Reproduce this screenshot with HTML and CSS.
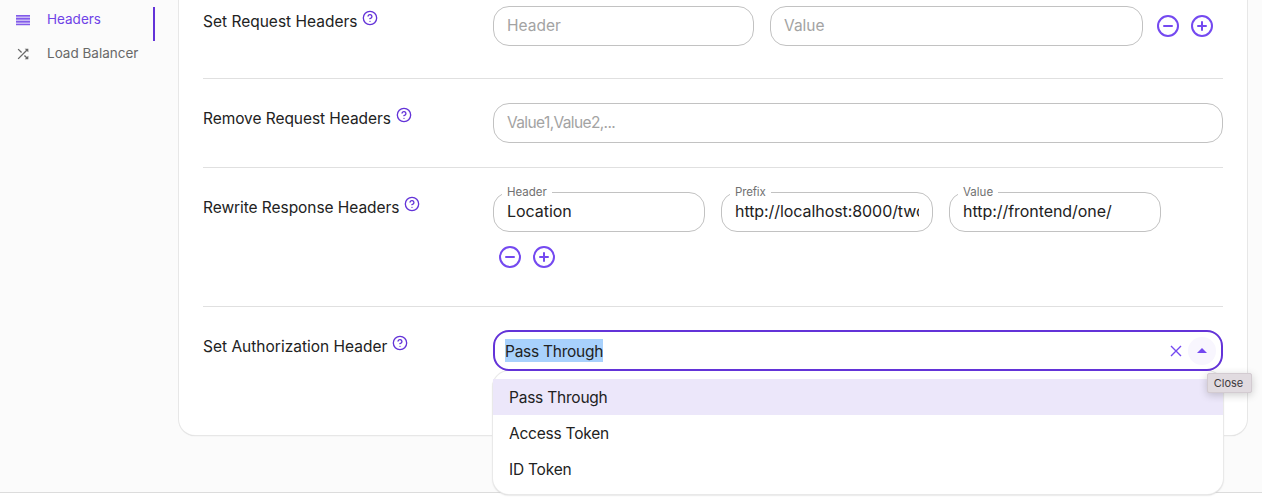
FILE: index.html
```html
<!DOCTYPE html>
<html lang="en">
<head>
<meta charset="utf-8">
<title>Headers</title>
<link rel="stylesheet" href="styles.css">
</head>
<body>
<svg class="defs" aria-hidden="true">
  <symbol id="help" viewBox="0 0 24 24"><circle cx="12" cy="12" r="10"/><path d="M9.09 9a3 3 0 0 1 5.83 1c0 2-3 3-3 3M12 17h.01"/></symbol>
  <symbol id="minus" viewBox="0 0 24 24"><circle cx="12" cy="12" r="10"/><path d="M8 12h8"/></symbol>
  <symbol id="plus" viewBox="0 0 24 24"><circle cx="12" cy="12" r="10"/><path d="M12 8v8M8 12h8"/></symbol>
</svg>
<div class="page">
  <nav class="sidebar">
    <div class="nav-list">
      <a class="nav-item active"><svg class="nav-icon" viewBox="0 0 16 16"><path fill="currentColor" fill-opacity=".35" d="M1 3h14v10H1z"/><path fill="currentColor" fill-opacity=".8" d="M1 3h14v1.6H1zM1 6h14v1.4H1zM1 9h14v1.4H1zM1 12h14v1.2H1z"/></svg><span class="nav-text">Headers</span></a>
      <a class="nav-item"><svg class="nav-icon" viewBox="0 0 24 24"><path fill="currentColor" d="M10.59 9.17 5.41 4 4 5.41l5.17 5.17 1.42-1.41zM14.5 4l2.04 2.04L4 18.59 5.41 20 17.96 7.46 20 9.5V4h-5.5zm.33 9.41-1.41 1.41 3.13 3.13L14.5 20H20v-5.5l-2.04 2.04-3.13-3.13z"/></svg><span class="nav-text">Load Balancer</span></a>
    </div>
    <div class="indicator"></div>
  </nav>
  <main class="card">
    <section class="row first">
      <div class="label"><span>Set Request Headers</span><svg class="help"><use href="#help"/></svg></div>
      <div class="fields">
        <div class="field w-header placeholder">Header</div>
        <div class="field grow placeholder">Value</div>
        <div class="actions"><svg class="action"><use href="#minus"/></svg><svg class="action"><use href="#plus"/></svg></div>
      </div>
    </section>
    <section class="row remove">
      <div class="label"><span class="label-mid">Remove Request Headers</span><svg class="help"><use href="#help"/></svg></div>
      <div class="fields"><div class="field grow placeholder list-hint">Value1,Value2,...</div></div>
    </section>
    <section class="row rewrite">
      <div class="label"><span class="label-long">Rewrite Response Headers</span><svg class="help"><use href="#help"/></svg></div>
      <div class="fields wrap">
        <div class="field third"><span class="legend">Header</span><span class="value">Location</span></div>
        <div class="field third"><span class="legend legend-prefix">Prefix</span><span class="value prefix">http://localhost:8000/two/</span></div>
        <div class="field third"><span class="legend">Value</span><span class="value">http://frontend/one/</span></div>
        <div class="actions below"><svg class="action"><use href="#minus"/></svg><svg class="action"><use href="#plus"/></svg></div>
      </div>
    </section>
    <section class="row auth">
      <div class="label"><span>Set Authorization Header</span><svg class="help"><use href="#help"/></svg></div>
      <div class="select">
        <div class="combo">
          <span class="selected">Pass Through</span>
          <svg class="clear" viewBox="0 0 12 12"><path d="M1 1l10 10M11 1L1 11"/></svg>
          <span class="toggle"><svg viewBox="0 0 10 5"><path d="M0 5l5-5 5 5z"/></svg></span>
        </div>
        <div class="menu">
          <div class="option current">Pass Through</div>
          <div class="option">Access Token</div>
          <div class="option">ID Token</div>
        </div>
        <div class="tooltip">Close</div>
      </div>
    </section>
  </main>
</div>
</body>
</html>
```
FILE: styles.css
```css
* { box-sizing: border-box; }
body {
  margin: 0;
  height: 503px;
  overflow: hidden;
  background: #fff;
  color: #222;
  font: 15.5px/24px Inter, "Open Sans", sans-serif;
}
.defs { position: absolute; width: 0; height: 0; }
.page {
  display: flex;
  align-items: flex-start;
  height: 493px;
  background: #fbfbfb;
  border-bottom: 1px solid #dcdcdc;
}
.sidebar { display: flex; width: 179px; flex: none; }
.nav-list { width: 153px; padding-top: 3px; }
.nav-item {
  display: flex;
  align-items: center;
  gap: 16px;
  height: 34px;
  padding-left: 15px;
  color: #686868;
  font-size: 13.5px;
}
.nav-icon { width: 16px; height: 16px; }
.nav-text { padding-bottom: 2px; }
.active { color: #6f43e7; }
.indicator { width: 2px; height: 34px; margin-top: 7px; background: #6333d8; }

.card {
  width: 1068px;
  height: 435px;
  padding: 0 24px;
  background: #fff;
  border-radius: 0 0 16px 16px;
  box-shadow: 0 0 0 1px #e7e7e7, 0 1px 1px #ccc;
}
.row {
  display: grid;
  grid-template-columns: 290px 730px;
  align-items: start;
  padding-top: 24px;
  border-bottom: 1px solid #e0e0e0;
}
.first { height: 79px; padding-top: 6px; }
.remove { height: 89px; }
.rewrite { height: 139px; }
.auth { border: 0; padding-top: 23px; }
.label { display: flex; gap: 5px; padding-top: 4px; white-space: nowrap; }
.auth .label { padding-top: 5px; }
.label-mid { letter-spacing: -.06px; }
.label-long { letter-spacing: -.06px; }
.help, .action { fill: none; stroke: #6333d8; stroke-width: 2; stroke-linecap: round; stroke-linejoin: round; }
.help { width: 16px; height: 16px; }
.action { width: 24px; height: 24px; stroke: #7449f0; }
.fields { display: flex; gap: 16px; }
.wrap { flex-wrap: wrap; row-gap: 13px; }
.field {
  position: relative;
  height: 40px;
  padding: 6px 13px;
  border: 1px solid #c2c2c2;
  border-radius: 16px;
  white-space: nowrap;
}
.w-header { width: 261px; }
.grow { flex: 1; }
.third { width: 212px; }
.placeholder { padding-top: 7px; color: #a3a3a3; }
.list-hint { letter-spacing: -.62px; }
.value { display: block; overflow: hidden; font-size: 16px; letter-spacing: -.05px; }
.prefix { letter-spacing: -.07px; }
.legend {
  position: absolute;
  top: -9px;
  left: 8px;
  padding: 0 5px;
  background: #fff;
  color: #717171;
  font-size: 11.5px;
  line-height: 16px;
}
.legend-prefix { letter-spacing: -.15px; }
.actions { display: flex; gap: 10px; align-items: center; margin-left: -3px; padding-right: 9px; }
.below { margin-left: 5px; }

.select { position: relative; }
.combo {
  position: relative;
  z-index: 1;
  display: flex;
  align-items: center;
  height: 41px;
  padding: 0 5px 0 10px;
  border: 2px solid #6333d8;
  border-radius: 16px;
  background: #fff;
}
.selected { height: 23px; margin-right: auto; background: #a8d1fc; line-height: 25px; letter-spacing: -.26px; }
.clear { width: 12px; height: 12px; margin-right: 6px; fill: none; stroke: #7449f0; stroke-width: 1.4; }
.toggle {
  display: flex;
  align-items: center;
  justify-content: center;
  width: 28px;
  height: 28px;
  border-radius: 50%;
  background: #f8f6fe;
}
.toggle svg { width: 10px; height: 5px; fill: #7449f0; }
.menu {
  position: absolute;
  top: 41px;
  left: 0;
  width: 730px;
  height: 123px;
  padding-top: 8px;
  background: #fff;
  border-radius: 16px;
  box-shadow: 0 0 0 1px #e9e9e9, 0 1px 2px #bbb;
}
.option { height: 36px; padding: 0 16px; line-height: 37px; letter-spacing: -.22px; }
.current { background: #ece7fa; }
.tooltip {
  position: absolute;
  z-index: 2;
  top: 43px;
  left: 714px;
  width: 45px;
  height: 20px;
  padding-right: 2px;
  border: 1px solid #d3cbd1;
  border-radius: 2px;
  background: #e1dbe0;
  box-shadow: 0 2px 8px rgba(0, 0, 0, .2);
  color: #3c393c;
  font-size: 11px;
  line-height: 18px;
  text-align: center;
}
```
